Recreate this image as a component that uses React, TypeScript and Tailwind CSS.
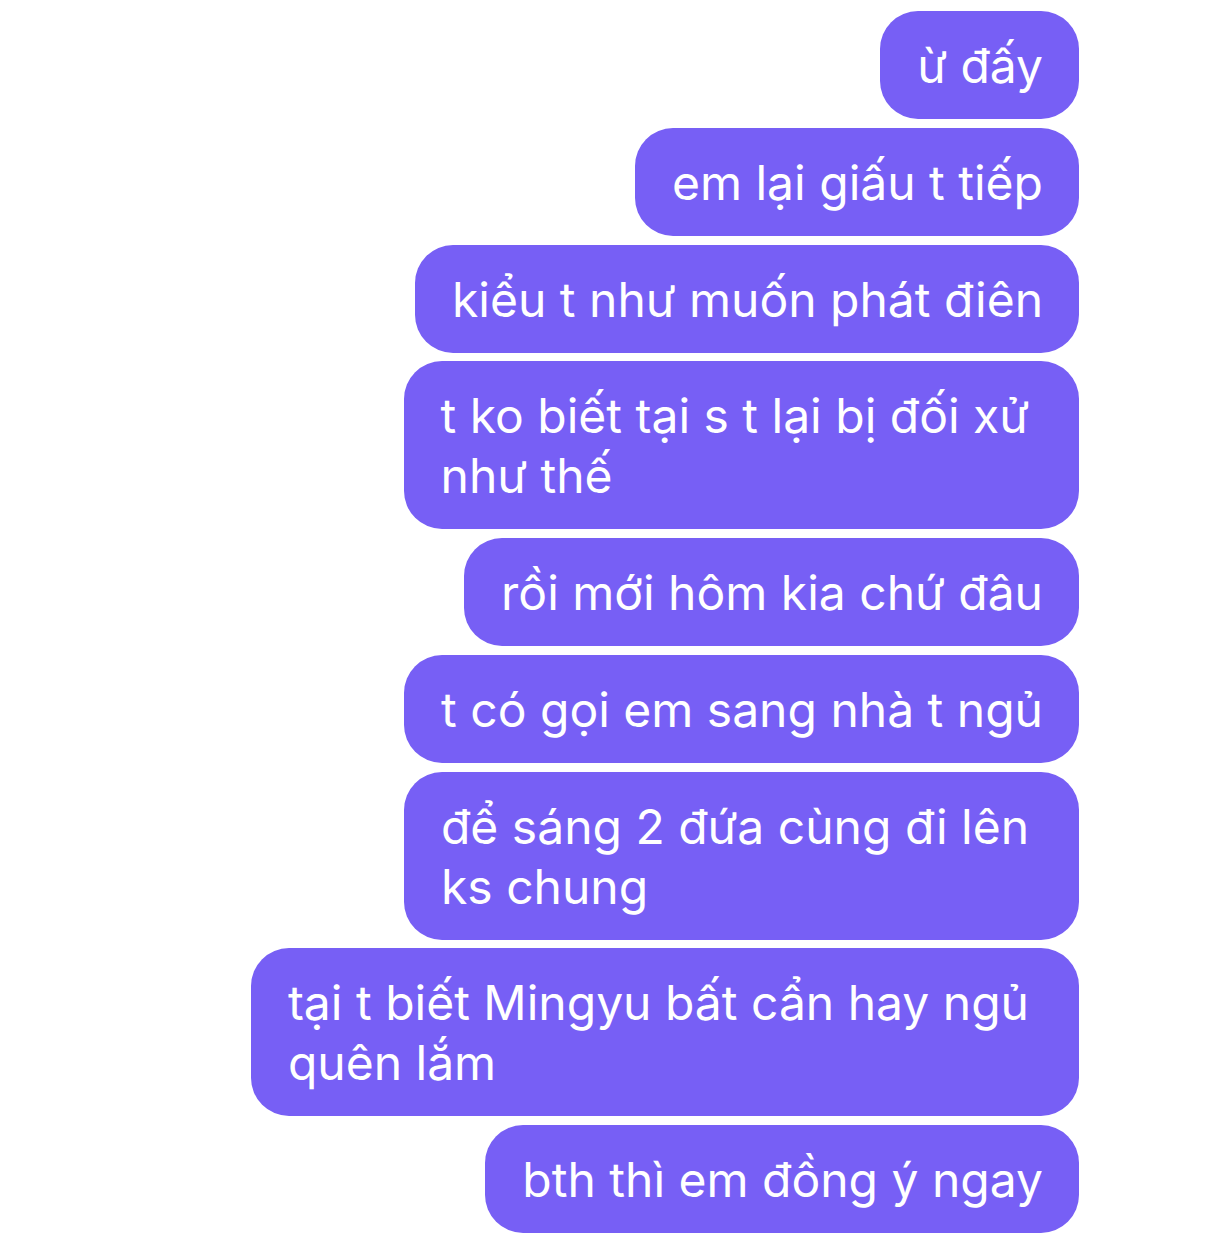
import React from "react";

const messages: string[][] = [
  ["ừ đấy"],
  ["em lại giấu t tiếp"],
  ["kiểu t như muốn phát điên"],
  ["t ko biết tại s t lại bị đối xử", "như thế"],
  ["rồi mới hôm kia chứ đâu"],
  ["t có gọi em sang nhà t ngủ"],
  ["để sáng 2 đứa cùng đi lên", "ks chung"],
  ["tại t biết Mingyu bất cẩn hay ngủ", "quên lắm"],
  ["bth thì em đồng ý ngay"],
];

export default function App() {
  return (
    <div
      className="w-[1205px] h-[1234px] bg-white flex flex-col items-end gap-[8.75px] pt-[11px] pr-[126px] overflow-hidden"
      style={{ fontFamily: "Inter, 'Noto Sans', sans-serif" }}
    >
      {messages.map((lines, i) => (
        <div
          key={i}
          className={
            lines.length > 1
              ? "bg-[#775FF5] text-white rounded-[38px] pl-[37px] pr-[50px] pt-[25px] pb-[23px] text-[48px] leading-[60px] whitespace-nowrap"
              : "bg-[#775FF5] text-white rounded-[38px] pl-[37px] pr-[36px] pt-[25px] pb-[23px] text-[48px] leading-[60px] whitespace-nowrap"
          }
        >
          {lines.map((l, j) => (
            <div key={j}>{l}</div>
          ))}
        </div>
      ))}
    </div>
  );
}
